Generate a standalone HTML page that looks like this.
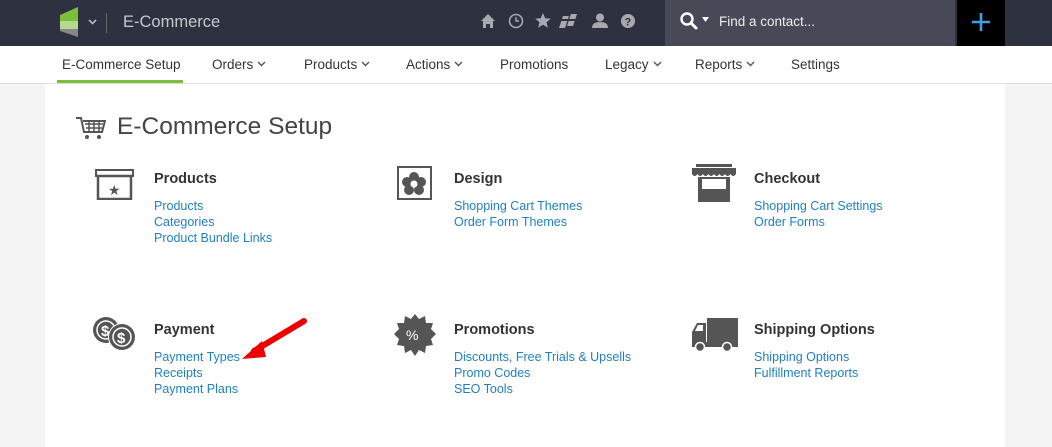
<!DOCTYPE html><html><head><style>
body{margin:0;width:1052px;height:447px;overflow:hidden;background:#f4f4f4;font-family:"Liberation Sans",sans-serif;}
.top{position:absolute;left:0;top:0;width:1052px;height:46px;background:#2e3140;}
.nav{position:absolute;left:0;top:46px;width:1052px;height:37px;background:#fff;border-bottom:1px solid #ddd;}
.nav span{position:absolute;top:11px;font-size:13.5px;color:#333;}
.nav svg{vertical-align:2px;margin-left:4px}
.panel{position:absolute;left:45px;top:84px;width:960px;height:363px;background:#fff;}
.a{position:absolute;font-size:12.5px;color:#1f7fc6;line-height:16px;}
.h{position:absolute;font-size:14.5px;font-weight:bold;color:#333;}
.ic{position:absolute;}
</style></head><body>
<div class="top">
<svg class="ic" style="left:60px;top:7px" width="20" height="30"><polygon points="0,8 18,0 18,14 0,14" fill="#7cbf3b"/><polygon points="0,14 18,14 18,22 0,22" fill="#b5d88f"/><polygon points="0,22 18,22 18,30 0,24" fill="#888"/></svg>
<svg class="ic" style="left:88px;top:19px" width="9" height="6"><path d="M1 1l3.5 3.5L8 1" fill="none" stroke="#bbb" stroke-width="1.6"/></svg>
<div style="position:absolute;left:106px;top:13px;width:1px;height:20px;background:#666"></div>
<div style="position:absolute;left:123px;top:13px;color:#c8c8cc;font-size:16.5px">E-Commerce</div>
<svg class="ic" style="left:480px;top:13px" width="160" height="18" fill="#a8a9ae">
<path d="M1 8L8 1l7 7h-2v7H10v-4H6v4H3V8z"/>
<circle cx="36" cy="8" r="6.5" fill="none" stroke="#a8a9ae" stroke-width="1.6"/><path d="M36 4v4h3" fill="none" stroke="#a8a9ae" stroke-width="1.4"/>
<path d="M63 0l2.2 5.2 5.6.4-4.3 3.6 1.4 5.5-4.9-3-4.9 3 1.4-5.5-4.3-3.6 5.6-.4z"/>
<path d="M83 3h6l-4 12h-6zM91 1h6l-4 12h-6z"/><path d="M79 6h18v2H79z" fill="#2e3140"/>
<circle cx="120" cy="4.5" r="4"/><path d="M112 15q0-6 8-6t8 6z"/>
<circle cx="148" cy="8" r="7"/><text x="144.5" y="12.5" font-size="11" font-weight="bold" fill="#2e3140" font-family="Liberation Sans">?</text>
</svg>
<div style="position:absolute;left:665px;top:0;width:290px;height:46px;background:#474956"></div>
<svg class="ic" style="left:680px;top:12px" width="30" height="20"><circle cx="7" cy="7" r="5.5" fill="none" stroke="#fff" stroke-width="2.4"/><path d="M11 11l5 5" stroke="#fff" stroke-width="3" stroke-linecap="round"/><path d="M22 5h7l-3.5 5z" fill="#fff"/></svg>
<div style="position:absolute;left:719px;top:14px;color:#eee;font-size:13.5px">Find a contact...</div>
<div style="position:absolute;left:957px;top:0;width:48px;height:46px;background:#000"></div>
<svg class="ic" style="left:972px;top:12px" width="18" height="20"><path d="M9 1v18M0 10h18" stroke="#3fa0e6" stroke-width="2.6"/></svg>
</div>
<div class="nav">
<span style="left:62px">E-Commerce Setup</span>
<div style="position:absolute;left:57px;top:34px;width:126px;height:3px;background:#7cbf3b"></div>
<span style="left:212px">Orders<svg width="9" height="6"><path d="M1 1l3.5 3.5L8 1" fill="none" stroke="#555" stroke-width="1.4"/></svg></span>
<span style="left:304px">Products<svg width="9" height="6"><path d="M1 1l3.5 3.5L8 1" fill="none" stroke="#555" stroke-width="1.4"/></svg></span>
<span style="left:406px">Actions<svg width="9" height="6"><path d="M1 1l3.5 3.5L8 1" fill="none" stroke="#555" stroke-width="1.4"/></svg></span>
<span style="left:500px">Promotions</span>
<span style="left:605px">Legacy<svg width="9" height="6"><path d="M1 1l3.5 3.5L8 1" fill="none" stroke="#555" stroke-width="1.4"/></svg></span>
<span style="left:695px">Reports<svg width="9" height="6"><path d="M1 1l3.5 3.5L8 1" fill="none" stroke="#555" stroke-width="1.4"/></svg></span>
<span style="left:791px">Settings</span>
</div>
<div class="panel"></div>
<svg class="ic" style="left:76px;top:116px" width="30" height="24"><path d="M0 2h5l3 14h18l3-11H7" fill="none" stroke="#555" stroke-width="2"/><path d="M9 8h18M10 12h16M13 5v11M18 5v11M23 5v11" stroke="#555" stroke-width="1.5"/><circle cx="11" cy="21" r="2" fill="#555"/><circle cx="23" cy="21" r="2" fill="#555"/></svg>
<div style="position:absolute;left:117px;top:113px;font-size:24.5px;color:#444">E-Commerce Setup</div>
<svg class="ic" style="left:95px;top:169px" width="40" height="31"><rect x="1" y="1" width="37" height="6" fill="none" stroke="#555" stroke-width="2"/><rect x="3" y="7" width="33" height="23" fill="none" stroke="#555" stroke-width="2.5"/><text x="13" y="26" font-size="14" fill="#555">★</text></svg>
<div class="h" style="left:154px;top:171px">Products</div>
<div class="a" style="left:154px;top:198px">Products<br>Categories<br>Product Bundle Links</div>
<svg class="ic" style="left:397px;top:166px" width="36" height="34"><rect x="1" y="1" width="33" height="32" fill="none" stroke="#555" stroke-width="2"/><g fill="#555"><circle cx="17" cy="11" r="5"/><circle cx="10" cy="16" r="5"/><circle cx="24" cy="16" r="5"/><circle cx="12" cy="24" r="5"/><circle cx="22" cy="24" r="5"/></g><circle cx="17" cy="18" r="3.5" fill="#fff"/></svg>
<div class="h" style="left:454px;top:171px">Design</div>
<div class="a" style="left:454px;top:198px">Shopping Cart Themes<br>Order Form Themes</div>
<svg class="ic" style="left:692px;top:164px" width="44" height="40"><rect x="4" y="0" width="36" height="3" fill="#555"/><path d="M0 4h44v6q-3 4-5.5 0q-3 4-5.5 0q-3 4-5.5 0q-3 4-5.5 0q-3 4-5.5 0q-3 4-5.5 0q-3 4-5.5 0q-3 4-5.5 0z" fill="#555"/><path d="M6 13h32v25H6z M10 15v10h24V15z" fill="#555" fill-rule="evenodd"/></svg>
<div class="h" style="left:754px;top:171px">Checkout</div>
<div class="a" style="left:754px;top:198px">Shopping Cart Settings<br>Order Forms</div>
<svg class="ic" style="left:92px;top:316px" width="46" height="36"><circle cx="14" cy="14" r="13" fill="#555"/><circle cx="14" cy="14" r="9" fill="none" stroke="#fff" stroke-width="1.5"/><text x="9" y="20" font-size="15" font-weight="bold" fill="#fff">$</text><circle cx="30" cy="21" r="14" fill="#fff"/><circle cx="30" cy="21" r="13" fill="#555"/><circle cx="30" cy="21" r="9" fill="none" stroke="#fff" stroke-width="1.5"/><text x="25" y="27" font-size="15" font-weight="bold" fill="#fff">$</text></svg>
<div class="h" style="left:154px;top:322px">Payment</div>
<div class="a" style="left:154px;top:349px">Payment Types<br>Receipts<br>Payment Plans</div>
<svg class="ic" style="left:240px;top:315px" width="72" height="48"><path d="M64 6L14 36" stroke="#e00" stroke-width="6" stroke-linecap="round"/><polygon points="2,44 22,26 26,42" fill="#e00"/></svg>
<svg class="ic" style="left:394px;top:314px" width="42" height="42"><polygon points="21,0 25,5 31,2 32,9 39,9 37,15 42,20 37,25 39,31 32,32 31,39 25,36 21,42 17,36 11,39 10,32 3,31 5,25 0,20 5,15 3,9 10,9 11,2 17,5" fill="#555"/><text x="12" y="26" font-size="14" fill="#fff">%</text></svg>
<div class="h" style="left:454px;top:322px">Promotions</div>
<div class="a" style="left:454px;top:349px">Discounts, Free Trials &amp; Upsells<br>Promo Codes<br>SEO Tools</div>
<svg class="ic" style="left:691px;top:318px" width="48" height="34"><rect x="16" y="0" width="31" height="24" fill="#555"/><path d="M1 24V14l5-9h9v19z" fill="#555"/><path d="M4 13l3-6h5v6z" fill="#fff"/><rect x="1" y="24" width="46" height="5" fill="#555"/><circle cx="9" cy="29" r="4.5" fill="#555" stroke="#fff" stroke-width="1.5"/><circle cx="36" cy="29" r="4.5" fill="#555" stroke="#fff" stroke-width="1.5"/></svg>
<div class="h" style="left:754px;top:322px">Shipping Options</div>
<div class="a" style="left:754px;top:349px">Shipping Options<br>Fulfillment Reports</div>
</body></html>
